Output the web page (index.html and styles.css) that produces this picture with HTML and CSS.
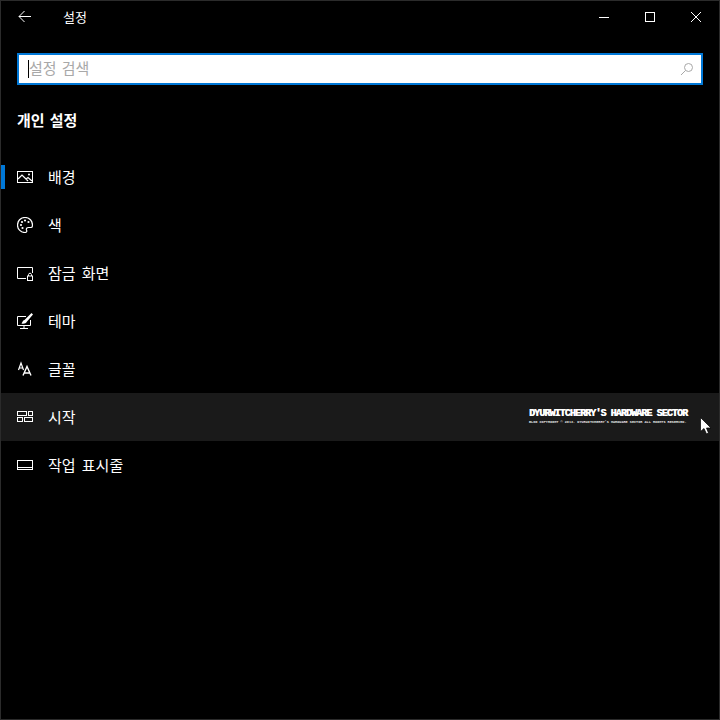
FILE: index.html
```html
<!DOCTYPE html>
<html lang="ko">
<head>
  <meta charset="UTF-8">
  <meta name="viewport" content="width=device-width, initial-scale=1.0">
  <title>설정</title>
  <link rel="stylesheet" href="styles.css">
</head>
<body>
  <div class="window">
    <div class="titlebar">
      <div class="title-left">
        <svg class="back-icon" width="14" height="14" viewBox="0 0 14 14"><path d="M6.500 1 L1 6.500 L6.500 12 M1 6.500 H13" fill="none" stroke="#fff" stroke-width="1"/></svg>
        <span class="title">설정</span>
      </div>
      <div class="window-btns">
        <svg width="12" height="12" viewBox="0 0 12 12"><path d="M1 6.500 H11" stroke="#fff" fill="none"/></svg>
        <svg width="12" height="12" viewBox="0 0 12 12"><rect x="1.500" y="1.500" width="9" height="9" stroke="#fff" fill="none"/></svg>
        <svg width="12" height="12" viewBox="0 0 12 12"><path d="M1 1 L11 11 M11 1 L1 11" stroke="#fff" fill="none"/></svg>
      </div>
    </div>

    <div class="search">
      <span class="caret"></span>
      <span class="placeholder">설정 검색</span>
      <svg class="search-icon" width="14" height="14" viewBox="0 0 14 14"><circle cx="8.500" cy="5.500" r="4" fill="none" stroke="#a8a8a8"/><path d="M5.500 8.500 L1 13" stroke="#a8a8a8" fill="none"/></svg>
    </div>

    <h2 class="section-title">개인 설정</h2>

    <nav class="nav">
      <a class="nav-item selected">
        <svg width="16" height="16" viewBox="0 0 16 16"><rect x="0.500" y="2.500" width="15" height="11" fill="none" stroke="#fff"/><path d="M1 10 L5 6 L11 12 M9 10 L11 8.500 L15 12" fill="none" stroke="#fff" stroke-width="1.200"/><circle cx="12" cy="5.500" r="1" fill="#fff"/></svg>
        <span>배경</span>
      </a>
      <a class="nav-item">
        <svg width="16" height="16" viewBox="0 0 16 16"><path d="M8 .5 C3.500 .5 .5 4 .5 8 C.5 12.500 4 15.500 8 15.500 C10 15.500 10 14 9.500 13 C9 11.500 10 10.500 11.500 10.500 H14 C15 10.500 15.500 9.500 15.500 8 C15.500 4 12.500 .5 8 .5 Z" fill="none" stroke="#fff" stroke-width="1.200"/><circle cx="4" cy="8" r="1.100" fill="#fff"/><circle cx="5" cy="5" r="1.100" fill="#fff"/><circle cx="8" cy="3.500" r="1.100" fill="#fff"/><circle cx="11.500" cy="5" r="1.100" fill="#fff"/><circle cx="5.500" cy="11" r="1.100" fill="#fff"/></svg>
        <span>색</span>
      </a>
      <a class="nav-item">
        <svg width="16" height="16" viewBox="0 0 16 16"><path d="M9 13.500 H.5 V2.500 H15.500 V8" fill="none" stroke="#fff"/><rect x="10.500" y="11" width="5" height="4.500" fill="none" stroke="#fff"/><path d="M11.500 11 V9.500 C11.500 7.800 14.500 7.800 14.500 9.500 V11" fill="none" stroke="#fff"/></svg>
        <span>잠금 화면</span>
      </a>
      <a class="nav-item">
        <svg width="16" height="16" viewBox="0 0 16 16"><path d="M9 3.500 H.5 V12.500 H13.500 V7" fill="none" stroke="#fff"/><path d="M3 15.500 H11 M7 12.500 V15.500" fill="none" stroke="#fff"/><path d="M14.500 0 L16 1.500 L10 8.500 C9 10.500 7 11 4.500 10.500 C5.500 9.500 5.500 7.500 7.500 7 Z" fill="#fff"/></svg>
        <span>테마</span>
      </a>
      <a class="nav-item">
        <svg width="16" height="16" viewBox="0 0 16 16"><path d="M1.500 9 L4 2 L6.500 9 M2.300 7 H5.700" fill="none" stroke="#fff" stroke-width="1.200"/><path d="M6 14.500 L10 5.500 L14 14.500 M7.500 12 H12.500" fill="none" stroke="#fff" stroke-width="1.400"/></svg>
        <span>글꼴</span>
      </a>
      <a class="nav-item hovered">
        <svg width="16" height="16" viewBox="0 0 16 16"><rect x="0.500" y="2.500" width="9" height="4" fill="none" stroke="#fff"/><rect x="11.500" y="2.500" width="4" height="4" fill="none" stroke="#fff"/><rect x="0.500" y="8.500" width="5" height="4" fill="none" stroke="#fff"/><rect x="7.500" y="8.500" width="8" height="4" fill="none" stroke="#fff"/></svg>
        <span>시작</span>
        <div class="watermark">
          <div class="wm-main">DYURWITCHERRY'S HARDWARE SECTOR</div>
          <div class="wm-sub">BLOG COPYRIGHT © 2013. DYURWITCHERRY'S HARDWARE SECTOR ALL RIGHTS RESERVED.</div>
        </div>
        <svg class="cursor" width="12" height="18" viewBox="0 0 12 18"><path d="M.5 .5 V14.500 L4 11.500 L6.500 17 L8.500 16 L6.500 11 H11 Z" fill="#fff" stroke="#000" stroke-width="0.700"/></svg>
      </a>
      <a class="nav-item">
        <svg width="16" height="16" viewBox="0 0 16 16"><rect x="0.500" y="3.500" width="15" height="9" fill="none" stroke="#fff"/><path d="M1 10.500 H15" stroke="#fff" fill="none"/></svg>
        <span>작업 표시줄</span>
      </a>
    </nav>
  </div>
</body>
</html>
```

FILE: styles.css
```css
* {
  box-sizing: border-box;
}
body {
  margin: 0;
  background: #000;
  font-family: "Noto Sans CJK KR", "Noto Sans", sans-serif;
  color: #fff;
}
.window {
  width: 720px;
  height: 720px;
  border: 1px solid #2b2b2b;
  background: #000;
  overflow: hidden;
}
.titlebar {
  display: flex;
  justify-content: space-between;
  align-items: center;
  height: 31px;
}
.title-left {
  display: flex;
  align-items: center;
  padding-left: 17px;
}
.back-icon {
  margin-right: 31px;
}
.title {
  font-size: 13px;
}
.window-btns {
  display: flex;
  gap: 34px;
  padding-right: 17px;
  margin-top: 1px;
}
.search {
  display: flex;
  align-items: center;
  position: relative;
  margin: 21px 16px 0;
  height: 32px;
  border: 2px solid #0078d7;
  background: #fff;
  padding-left: 9px;
}
.caret {
  width: 1px;
  height: 18px;
  background: #000;
}
.placeholder {
  color: #a8a8a8;
  font-size: 15px;
  line-height: 20px;
  margin-top: -2px;
  word-spacing: 1px;
  flex: 1;
}
.search-icon {
  margin-right: 7px;
}
.section-title {
  margin: 22px 0 0 16px;
  height: 22px;
  font-size: 15px;
  line-height: 26px;
  font-weight: 700;
  word-spacing: 1px;
}
.nav {
  display: flex;
  flex-direction: column;
  margin-top: 24px;
}
.nav-item {
  display: flex;
  align-items: center;
  position: relative;
  height: 48px;
  padding-left: 16px;
  font-size: 15px;
  word-spacing: 2px;
  gap: 15px;
}
.nav-item span {
  margin-top: -2px;
}
.nav-item.selected::before {
  content: "";
  position: absolute;
  left: 0;
  top: 12px;
  width: 4px;
  height: 24px;
  background: #0078d7;
}
.nav-item.hovered {
  background: #1a1a1a;
}
.watermark {
  position: absolute;
  left: 528px;
  top: 15px;
  white-space: nowrap;
  font-family: "Liberation Mono", monospace;
  font-weight: 700;
  word-spacing: 0;
}
.wm-main {
  font-size: 10px;
  line-height: 11px;
  letter-spacing: -0.9px;
  text-shadow: 0.4px 0 0 #fff;
}
.wm-sub {
  font-size: 3.5px;
  line-height: 6px;
  color: #e0e0e0;
}
.cursor {
  position: absolute;
  left: 699px;
  top: 24px;
}
```
